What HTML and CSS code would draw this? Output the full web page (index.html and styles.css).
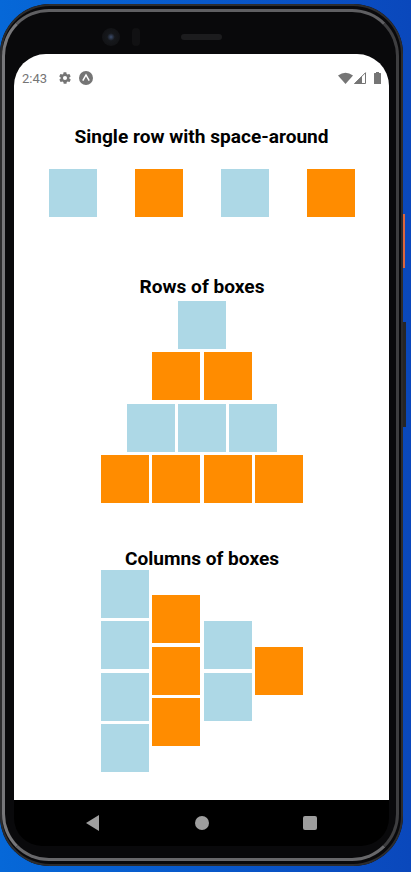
FILE: index.html
```html
<!DOCTYPE html>
<html lang="en">
<head>
    <meta charset="UTF-8">
    <meta name="viewport" content="width=device-width, initial-scale=1.0">
    <title>Flexbox boxes</title>
    <link rel="stylesheet" href="styles.css">
</head>
<body>
    <div class="phone">
        <span class="power"></span>
        <span class="volume"></span>

        <div class="earpiece">
            <span class="camera"></span>
            <span class="sensor"></span>
            <span class="speaker"></span>
        </div>

        <div class="screen">
            <div class="status">
                <span class="time">2:43</span>
                <svg class="gear" width="14" height="14" viewBox="0 0 24 24"><path d="M19.4 13a7.600 7.600 0 0 0 0-2l2.100-1.600a.5.5 0 0 0 .1-.6l-2-3.500a.5.5 0 0 0-.6-.2l-2.500 1a7.300 7.300 0 0 0-1.700-1l-.4-2.700a.5.5 0 0 0-.5-.4h-4a.5.5 0 0 0-.5.4l-.4 2.700a7.300 7.300 0 0 0-1.700 1l-2.500-1a.5.5 0 0 0-.6.2l-2 3.500a.5.5 0 0 0 .1.600L4.600 11a7.600 7.600 0 0 0 0 2l-2.100 1.600a.5.5 0 0 0-.1.600l2 3.500a.5.5 0 0 0 .6.200l2.500-1a7.300 7.300 0 0 0 1.700 1l.4 2.700a.5.500 0 0 0 .5.400h4a.5.500 0 0 0 .5-.4l.4-2.700a7.300 7.300 0 0 0 1.700-1l2.500 1a.5.500 0 0 0 .6-.2l2-3.500a.5.500 0 0 0-.1-.6zM12 15.500a3.500 3.500 0 1 1 0-7 3.500 3.500 0 0 1 0 7z"/></svg>
                <svg class="expo" width="14" height="14" viewBox="0 0 14 14"><circle cx="7" cy="7" r="7"/><path d="M3.800 9.600 7 4l3.200 5.600" fill="none" stroke="#fff" stroke-width="1.500"/></svg>
                <span class="status-right">
                    <svg width="15" height="12" viewBox="0 0 15 12"><path d="M0 3.500Q7.500-2 15 3.500L7.500 12z"/></svg>
                    <svg width="13" height="12" viewBox="0 0 13 12"><path d="M.7 11.500 11.500.7v10.800z" fill="#fff" stroke="#757575"/><path d="M0 12 8 4v8z"/></svg>
                    <svg class="battery" width="7" height="12" viewBox="0 0 7 12"><path d="M2 0h3v1h1.500a.5.500 0 0 1 .5.500V11.500a.5.500 0 0 1-.5.500H.5a.5.500 0 0 1-.5-.5V1.500A.5.500 0 0 1 .5 1H2z"/></svg>
                </span>
            </div>

            <section class="around">
                <h2>Single row with space-around</h2>
                <div class="around-row">
                    <div class="box blue"></div>
                    <div class="box orange"></div>
                    <div class="box blue"></div>
                    <div class="box orange"></div>
                </div>
            </section>

            <section class="rows">
                <h2>Rows of boxes</h2>
                <div class="row">
                    <div class="box blue"></div>
                </div>
                <div class="row">
                    <div class="box orange"></div>
                    <div class="box orange"></div>
                </div>
                <div class="row">
                    <div class="box blue"></div>
                    <div class="box blue"></div>
                    <div class="box blue"></div>
                </div>
                <div class="row">
                    <div class="box orange"></div>
                    <div class="box orange"></div>
                    <div class="box orange"></div>
                    <div class="box orange"></div>
                </div>
            </section>

            <section class="columns">
                <h2>Columns of boxes</h2>
                <div class="column-wrap">
                    <div class="column">
                        <div class="box blue"></div>
                        <div class="box blue"></div>
                        <div class="box blue"></div>
                        <div class="box blue"></div>
                    </div>
                    <div class="column">
                        <div class="box orange"></div>
                        <div class="box orange"></div>
                        <div class="box orange"></div>
                    </div>
                    <div class="column">
                        <div class="box blue"></div>
                        <div class="box blue"></div>
                    </div>
                    <div class="column">
                        <div class="box orange"></div>
                    </div>
                </div>
            </section>
        </div>

        <div class="nav">
            <svg width="14" height="16" viewBox="0 0 14 16"><path d="M0 8 13 0v16z"/></svg>
            <span class="nav-circle"></span>
            <span class="nav-square"></span>
        </div>
    </div>
</body>
</html>
```

FILE: styles.css
```css
html,
body {
    margin: 0;
    padding: 0;
}

body {
    width: 411px;
    height: 872px;
    overflow: hidden;
    background: linear-gradient(to right, #0668d8, #0a48bc);
    font-family: Roboto, "Liberation Sans", sans-serif;
    padding-top: 4px;
    box-sizing: border-box;
}

.phone {
    position: relative;
    width: 403px;
    height: 862px;
    padding: 9px 14px 0;
    box-sizing: border-box;
    background: #09090b;
    border-radius: 50px;
    box-shadow: inset 0 0 0 2px #2c2c2e;
}

/* grey metal ring round the bezel */
.phone::before {
    content: "";
    position: absolute;
    top: 5px;
    left: 2px;
    right: 4px;
    bottom: 5px;
    border-style: solid;
    border-width: 3px;
    border-color: #5f5f62 #3e3e40 #68686b #77777a;
    border-radius: 47px;
    pointer-events: none;
}

.power {
    position: absolute;
    left: 403px;
    top: 210px;
    width: 2px;
    height: 54px;
    background: #d9663f;
}

.volume {
    position: absolute;
    left: 403px;
    top: 318px;
    width: 3px;
    height: 105px;
    background: #262628;
}

.earpiece {
    height: 41px;
    display: flex;
    align-items: center;
    padding: 6px 0 0 88px;
    box-sizing: border-box;
}

.camera {
    width: 18px;
    height: 18px;
    border-radius: 50%;
    background: radial-gradient(circle, #3c4c6c 0, #16181c 30%, #0f0f11 100%);
}

.sensor {
    width: 8px;
    height: 18px;
    margin-left: 12px;
    border-radius: 4px;
    background: #111113;
}

.speaker {
    width: 41px;
    height: 6px;
    margin-left: 41px;
    border-radius: 3px;
    background: #1c1c1e;
}

.screen {
    width: 375px;
    height: 746px;
    background: #fff;
    border-radius: 32px 32px 0 0;
    overflow: hidden;
}

.status {
    display: flex;
    align-items: center;
    height: 14px;
    padding: 17px 8px 0;
    color: #757575;
    font-size: 13px;
}

.status svg {
    fill: #757575;
    display: block;
}

.gear {
    margin-left: 11px;
}

.expo {
    margin-left: 7px;
}

.status-right {
    margin-left: auto;
    display: flex;
    align-items: center;
    gap: 1px;
}

.battery {
    margin-left: 6px;
}

h2 {
    margin: 0;
    font-size: 19.1px;
    font-weight: 700;
    line-height: 20px;
    text-align: center;
    color: #000;
}

.box {
    width: 48px;
    height: 48px;
    flex-shrink: 0;
}

.blue {
    background-color: #add8e6;
}

.orange {
    background-color: #ff8c00;
}

.around {
    padding-top: 42px;
}

.around-row {
    display: flex;
    justify-content: space-around;
    margin-top: 22px;
    padding: 0 15px 0 16px;
}

.rows {
    padding: 60px 0 0 1px;
    display: flex;
    flex-direction: column;
    gap: 3.4px;
}

.rows h2 {
    margin-bottom: 0.6px;
}

.row {
    display: flex;
    justify-content: center;
    gap: 3.4px;
}

.columns {
    padding: 46px 0 0 1px;
}

.column-wrap {
    display: flex;
    justify-content: center;
    align-items: center;
    gap: 3.4px;
    margin-top: 0.6px;
}

.column {
    display: flex;
    flex-direction: column;
    gap: 3.4px;
}

.nav {
    height: 46px;
    background: #000;
    width: 375px;
    border-radius: 0 0 28px 28px;
    display: flex;
    align-items: center;
    justify-content: center;
}

.nav svg {
    fill: #9e9e9e;
    margin-right: 95px;
}

.nav-circle {
    width: 14px;
    height: 14px;
    border-radius: 50%;
    background: #9e9e9e;
}

.nav-square {
    width: 14px;
    height: 14px;
    margin-left: 94px;
    border-radius: 2px;
    background: #9e9e9e;
}
```
